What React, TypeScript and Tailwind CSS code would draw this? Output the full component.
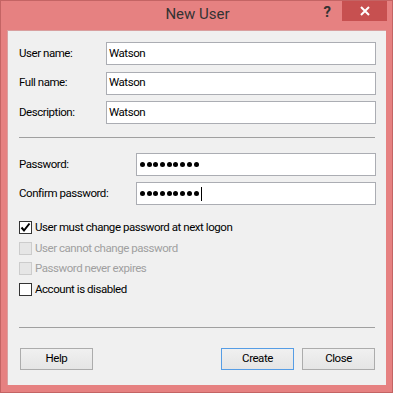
const fields = ["User name:", "Full name:", "Description:"];

const checks = [
  { label: "User must change password at next logon", checked: true, disabled: false },
  { label: "User cannot change password", checked: false, disabled: true },
  { label: "Password never expires", checked: false, disabled: true },
  { label: "Account is disabled", checked: false, disabled: false },
];

function Dots({ caret }: { caret?: boolean }) {
  return (
    <div className="flex items-center gap-[1.7px]">
      {Array.from({ length: 9 }).map((_, i) => (
        <span key={i} className="block w-[5px] h-[5px] rounded-full bg-black" />
      ))}
      {caret && <span className="block w-px h-[14px] bg-black ml-[1px]" />}
    </div>
  );
}

function Button({ label, focused }: { label: string; focused?: boolean }) {
  return (
    <div
      className={
        "w-[73px] h-[22px] flex items-center justify-center border bg-gradient-to-b from-[#f0f0f0] to-[#e5e5e5] text-black " +
        (focused ? "border-[#569de5]" : "border-[#acacac]")
      }
    >
      {label}
    </div>
  );
}

export default function App() {
  return (
    <div className="w-[394px] h-[393px] bg-white font-['Segoe_UI',Roboto,sans-serif] text-[11.5px] tracking-[-0.45px] leading-none">
      <div className="w-[393px] h-[393px] bg-[#e68181] border border-[#c46464] flex flex-col">
        {/* title bar */}
        <div className="h-[29px] flex relative tracking-normal">
          <div className="flex-1 flex justify-center pt-[6px] text-[15px] text-[#333333] pl-[2px]">
            New User
          </div>
          <div className="absolute right-[61px] top-[4px] text-[15px] font-bold text-[#333333]">?</div>
          <div className="absolute right-[5px] top-0 w-[45px] h-[20px] bg-[#c75050] flex items-center justify-center">
            <svg width="10" height="10" viewBox="0 0 10 10">
              <path d="M1 1L9 9M9 1L1 9" stroke="white" strokeWidth="2" />
            </svg>
          </div>
        </div>

        {/* client */}
        <div className="ml-[6px] mr-[6px] h-[355px] bg-[#f0f0f0] border-l border-t border-[#d9a0a0] px-[11px] pt-[11px] flex flex-col">
          <div className="flex flex-col gap-[6.5px]">
            {fields.map((f) => (
              <div key={f} className="flex items-center h-[23px]">
                <span className="w-[87px] text-black">{f}</span>
                <div className="flex-1 h-[23px] bg-white border border-[#abadb3] flex items-center pl-[2px] text-black mr-[-1px]">
                  Watson
                </div>
              </div>
            ))}
          </div>

          <div className="mt-[13px] h-px bg-[#a0a0a0]" />

          <div className="mt-[15px] flex flex-col gap-[6px]">
            {["Password:", "Confirm password:"].map((f, i) => (
              <div key={f} className="flex items-center h-[23px]">
                <span className="w-[117px] text-black">{f}</span>
                <div className="flex-1 h-[23px] bg-white border border-[#abadb3] flex items-center pl-[3px] mr-[-1px]">
                  <Dots caret={i === 1} />
                </div>
              </div>
            ))}
          </div>

          <div className="mt-[16px] flex flex-col">
            {checks.map((c) => (
              <div key={c.label} className="flex items-start h-[20.7px]">
                <div
                  className={
                    "w-[13px] h-[13px] border flex items-center justify-center " +
                    (c.disabled ? "bg-[#e6e6e6] border-[#cccccc]" : "bg-white border-[#333333]")
                  }
                >
                  {c.checked && (
                    <svg width="11" height="11" viewBox="0 0 11 11">
                      <path d="M1.5 5.5L4 8.5L9.5 1.5" fill="none" stroke="black" strokeWidth="2" />
                    </svg>
                  )}
                </div>
                <span className={"ml-[3px] mt-[1px] " + (c.disabled ? "text-[#a0a0a0]" : "text-black")}>{c.label}</span>
              </div>
            ))}
          </div>

          <div className="mt-[23px] h-px bg-[#a0a0a0]" />

          <div className="mt-[20px] flex items-center">
            <div className="ml-[1px]">
              <Button label="Help" />
            </div>
            <div className="flex-1" />
            <Button label="Create" focused />
            <div className="ml-[8px]">
              <Button label="Close" />
            </div>
          </div>
        </div>
      </div>
    </div>
  );
}
